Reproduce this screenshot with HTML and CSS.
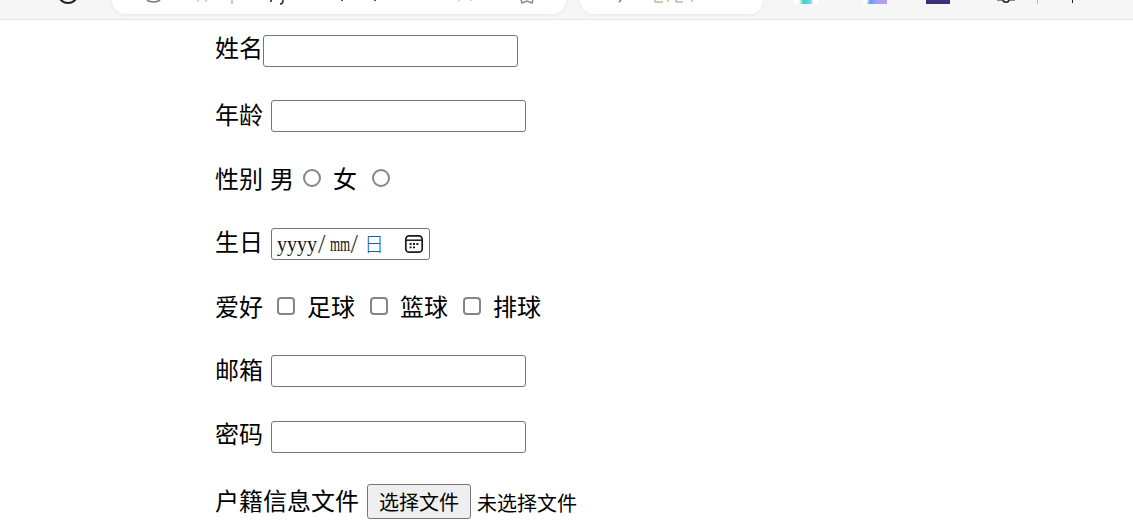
FILE: index.html
```html
<!DOCTYPE html>
<html lang="zh-CN">
<head>
<meta charset="utf-8">
<title>表单</title>
<link rel="stylesheet" href="styles.css">
</head>
<body>
<header class="toolbar">
  <svg class="tb-reload" width="20" height="4" viewBox="0 0 20 4"><path d="M1 -5a9 8 0 0 0 18 0" fill="none" stroke="#222" stroke-width="2"/></svg>
  <div class="pill pill-address">
    <svg width="454" height="13" viewBox="0 0 454 13">
      <path d="M35 0a7 3 0 0 0 13 0" fill="none" stroke="#777" stroke-width="1.5"/>
      <path d="M86 0v2M94 0v2" stroke="#c9a36a" stroke-width="1"/>
      <path d="M120 0v4" stroke="#999" stroke-width="1"/>
      <path d="M159 0v2M230 0v1" stroke="#123" stroke-width="1.5"/>
      <path d="M171 0c0 3-1 4-3 4" fill="none" stroke="#123" stroke-width="1.5"/>
      <path d="M263 0v1" stroke="#123" stroke-width="1.5"/>
      <path d="M347 0v1M359 0v1" stroke="#aaa" stroke-width="1"/>
      <path d="M409 0l1 3 5-2 5 2 1-3" fill="none" stroke="#888" stroke-width="1.5"/>
    </svg>
  </div>
  <div class="pill pill-search">
    <svg width="183" height="13" viewBox="0 0 183 13">
      <path d="M41 0l-2 2" stroke="#666" stroke-width="1.2"/>
      <path d="M75 0v2h8M88 0v2M96 0v2h7M112 0v2" fill="none" stroke="#a98f6a" stroke-width="1"/>
    </svg>
  </div>
  <span class="ext ext-teal"></span>
  <span class="ext ext-violet"></span>
  <span class="ext ext-navy"></span>
  <svg class="tb-gear" width="18" height="4" viewBox="0 0 18 4"><path d="M0 .5h5M13 .5h5" stroke="#888"/><circle cx="9" cy="-1" r="3.2" fill="none" stroke="#222" stroke-width="1.6"/></svg>
  <span class="tb-sep"></span>
  <span class="tb-dot"></span>
</header>

<form class="form">
  <div class="row gap-65">
    <label class="lift-8" for="name">姓名</label>
    <input class="text-field" id="name" type="text">
  </div>
  <div class="row">
    <label class="after-label" for="age">年龄</label>
    <input class="text-field" id="age" type="text">
  </div>
  <div class="row">
    <span class="label">性别</span>
    <label class="opt-male" for="male">男</label>
    <input class="radio radio-male" id="male" type="radio" name="sex">
    <label class="opt-female" for="female">女</label>
    <input class="radio radio-female" id="female" type="radio" name="sex">
  </div>
  <div class="row">
    <label class="after-label lift-6" for="birth">生日</label>
    <div class="date-field" id="birth">
      <span class="date-y">yyyy</span><span class="date-s">/</span><span class="date-m">mm</span><span class="date-s">/</span><span class="date-d">日</span>
      <svg class="date-icon" width="20" height="20" viewBox="0 0 20 20">
        <rect x="1.8" y="1.8" width="16.4" height="16.4" rx="3.4" fill="none" stroke="#1a1a1a" stroke-width="1.7"/>
        <path d="M2 6.2h16" stroke="#1a1a1a" stroke-width="1.5"/>
        <path d="M5.6 10h2M9 10h2M12.4 10h2M5.6 13.4h2M9 13.4h2" stroke="#1a1a1a" stroke-width="1.8"/>
      </svg>
    </div>
  </div>
  <div class="row gap-63">
    <span class="label">爱好</span>
    <input class="check check-first" id="football" type="checkbox">
    <label class="check-label" for="football">足球</label>
    <input class="check" id="basketball" type="checkbox">
    <label class="check-label" for="basketball">篮球</label>
    <input class="check" id="volleyball" type="checkbox">
    <label class="check-label" for="volleyball">排球</label>
  </div>
  <div class="row gap-66">
    <label class="after-label" for="mail">邮箱</label>
    <input class="text-field" id="mail" type="text">
  </div>
  <div class="row gap-63">
    <label class="after-label lift-8" for="pwd">密码</label>
    <input class="text-field" id="pwd" type="password">
  </div>
  <div class="row row-file">
    <span class="label">户籍信息文件</span>
    <button class="file-btn" type="button">选择文件</button>
    <span class="file-name">未选择文件</span>
  </div>
</form>
</body>
</html>
```
FILE: styles.css
```css
* { box-sizing: border-box; }

html, body {
  margin: 0;
  height: 100%;
  overflow: hidden;
  background: #fff;
}

body {
  font-family: "Noto Sans CJK SC", "Liberation Sans", sans-serif;
  font-size: 24px;
  color: #000;
}

/* browser chrome, cropped at the top */
.toolbar {
  display: flex;
  align-items: flex-start;
  height: 20px;
  overflow: hidden;
  background: #f6f6f6;
  border-bottom: 1px solid #e6e6e6;
}

.tb-reload { margin-left: 58px; flex: none; }

.pill {
  flex: none;
  height: 14px;
  background: #fff;
  border-radius: 0 0 22px 22px;
  box-shadow: 0 0 4px rgba(0, 0, 0, .08);
}

.pill svg { display: block; }
.pill-address { width: 454px; margin-left: 34px; }
.pill-search { width: 183px; margin-left: 14px; }

.ext { flex: none; width: 24px; height: 4px; }
.ext-teal { margin-left: 31px; background: linear-gradient(90deg, #fff 20%, #3fd0c9 40%, #7ad6e8 70%, #fff 80%); }
.ext-violet { margin-left: 45px; background: linear-gradient(100deg, #fff 15%, #5aa0ee 30%, #b59cf0 60%); }
.ext-navy { margin-left: 39px; background: #3b2f78; }

.tb-gear { margin-left: 47px; flex: none; }
.tb-sep { margin-left: 22px; width: 1px; height: 4px; background: #bbb; flex: none; }
.tb-dot { margin-left: 34px; width: 1px; height: 3px; background: #222; flex: none; }

/* form */
.form { padding: 15px 0 0 215px; }

.row {
  display: flex;
  align-items: center;
  height: 32px;
  margin-bottom: 32px;
  line-height: 32px;
  white-space: nowrap;
}

.gap-65 { margin-bottom: 33px; }
.gap-63 { margin-bottom: 31px; }
.gap-66 { margin-bottom: 34px; }

.row > label, .row > span { padding-bottom: 4px; }
.row > .lift-6 { padding-bottom: 6px; }
.row > .lift-8 { padding-bottom: 8px; }

.after-label { margin-right: 8px; }

.text-field {
  width: 255px;
  height: 32px;
  margin: 0;
  padding: 0 3px;
  background: #fff;
  border: 1px solid #767676;
  border-radius: 3px;
  font-size: 20px;
}

.opt-male { margin-left: 7px; }
.opt-female { margin-left: 12px; }

.radio {
  appearance: none;
  width: 18px;
  height: 18px;
  margin: 0 0 5px;
  background: #fff;
  border: 2px solid #858585;
  border-radius: 50%;
}
.radio-male { margin-left: 9px; }
.radio-female { margin-left: 15px; }

.check {
  appearance: none;
  width: 18px;
  height: 18px;
  margin: 0 0 4px 15px;
  background: #fff;
  border: 2px solid #858585;
  border-radius: 4px;
}
.check-first { margin-left: 14px; }
.check-label { margin-left: 12px; }

.date-field {
  display: flex;
  align-items: center;
  width: 159px;
  height: 32px;
  padding-left: 5px;
  border: 1px solid #767676;
  border-radius: 3px;
  font-family: "Liberation Serif", "Noto Sans CJK SC", serif;
  font-size: 20px;
  color: #111;
}
.row .date-field span { padding-bottom: 0; }
.date-s { font-size: 27px; font-weight: 400; color: #444; margin: 0 1px; }
.date-m { display: inline-block; width: 20px; margin-left: 3px; transform: scaleX(.65); transform-origin: left center; }
.date-d { font-family: "Noto Sans CJK SC", sans-serif; font-size: 20px; font-weight: 300; color: #1d5ea8; margin-left: 5px; }
.date-icon { margin-left: auto; margin-right: 5px; }

.row-file { height: 35px; margin-bottom: 0; }

.file-btn {
  width: 104px;
  height: 35px;
  margin: 0 0 0 8px;
  padding: 0;
  background: #efefef;
  border: 1px solid #767676;
  border-radius: 3px;
  font-family: inherit;
  font-size: 20px;
  line-height: 1;
  color: #000;
}

.row > .file-name { font-size: 20px; margin-left: 6px; padding: 2px 0 0; }
```
